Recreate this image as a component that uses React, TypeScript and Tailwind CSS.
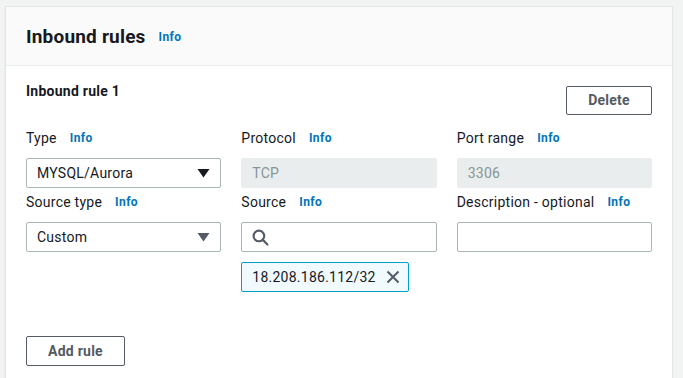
import * as React from "react"

const Info = () => (
	<span className="ml-[13px] text-[12px] font-bold tracking-[0.4px] text-[#0073bb]">Info</span>
)

const Caret = ({ color }: { color: string }) => (
	<svg width="13" height="10" viewBox="0 0 13 10" className="shrink-0">
		<path d="M0.5 1 L12.5 1 L6.5 9.5 Z" fill={color} />
	</svg>
)

const Label = ({ text }: { text: string }) => (
	<div className="flex h-[22px] items-center text-[14px] text-[#16191f]">
		<span>{text}</span>
		<Info />
	</div>
)

const inputBox = "mt-[9px] flex h-[30px] items-center rounded-[2px] border px-[10px] text-[14px]"

export default function App() {
	return (
		<div className="min-h-screen bg-[#f2f3f3] pl-[5px] pr-[10px] pt-[6px] tracking-[0.25px]" style={{ fontFamily: "Roboto, 'Liberation Sans', sans-serif" }}>
			<div className="h-[380px] border border-[#e3e6e6] bg-white shadow-[0_1px_1px_rgba(0,28,36,0.15)]">
				{/* header */}
				<div className="flex h-[59px] items-center border-b border-[#eaeded] bg-[#fafafa] px-[20px] pt-[2px]">
					<h2 className="text-[19px] font-bold tracking-[0.2px] text-[#16191f]">Inbound rules</h2>
					<Info />
				</div>

				<div className="px-[20px] pt-[15px]">
					<div className="flex items-start justify-between">
						<h3 className="h-[20px] text-[14px] font-bold leading-[20px] text-[#16191f]">Inbound rule 1</h3>
						<button className="mt-[5px] h-[29px] w-[86px] rounded-[2px] border border-[#545b64] text-[14px] font-bold text-[#545b64]">
							Delete
						</button>
					</div>

					<div className="mt-[12px] grid grid-cols-3 gap-x-[20px]">
						<div>
							<Label text="Type" />
							<div className={inputBox + " justify-between border-[#aab7b8] text-[#16191f]"}>
								<span>MYSQL/Aurora</span>
								<Caret color="#16191f" />
							</div>
						</div>
						<div>
							<Label text="Protocol" />
							<div className={inputBox + " border-[#eaeded] bg-[#eaeded] text-[#879596]"}>TCP</div>
						</div>
						<div>
							<Label text="Port range" />
							<div className={inputBox + " border-[#eaeded] bg-[#eaeded] text-[#879596]"}>3306</div>
						</div>

						<div className="mt-[3px]">
							<Label text="Source type" />
							<div className={inputBox + " justify-between border-[#aab7b8] text-[#16191f]"}>
								<span>Custom</span>
								<Caret color="#545b64" />
							</div>
						</div>
						<div className="mt-[3px]">
							<Label text="Source" />
							<div className={inputBox + " border-[#aab7b8]"}>
								<svg width="17" height="17" viewBox="0 0 16 16" fill="none" stroke="#545b64" strokeWidth="2">
									<circle cx="6.5" cy="6.5" r="5" />
									<path d="M10 10 L14.5 14.5" strokeLinecap="round" />
								</svg>
							</div>
							<div className="mt-[10px] inline-flex h-[30px] items-center rounded-[2px] border border-[#00a1c9] bg-[#f1faff] pl-[10px] pr-[8px] text-[14px] text-[#16191f]">
								<span>18.208.186.112/32</span>
								<svg width="14" height="14" viewBox="0 0 14 14" className="ml-[10px]" stroke="#545b64" strokeWidth="2">
									<path d="M1.5 1.5 L12.5 12.5 M12.5 1.5 L1.5 12.5" />
								</svg>
							</div>
						</div>
						<div className="mt-[3px]">
							<Label text="Description - optional" />
							<div className={inputBox + " border-[#aab7b8]"}></div>
						</div>
					</div>

					<button className="mt-[44px] h-[30px] w-[99px] rounded-[2px] border border-[#545b64] text-[14px] font-bold text-[#545b64]">
						Add rule
					</button>
				</div>
			</div>
		</div>
	)
}
